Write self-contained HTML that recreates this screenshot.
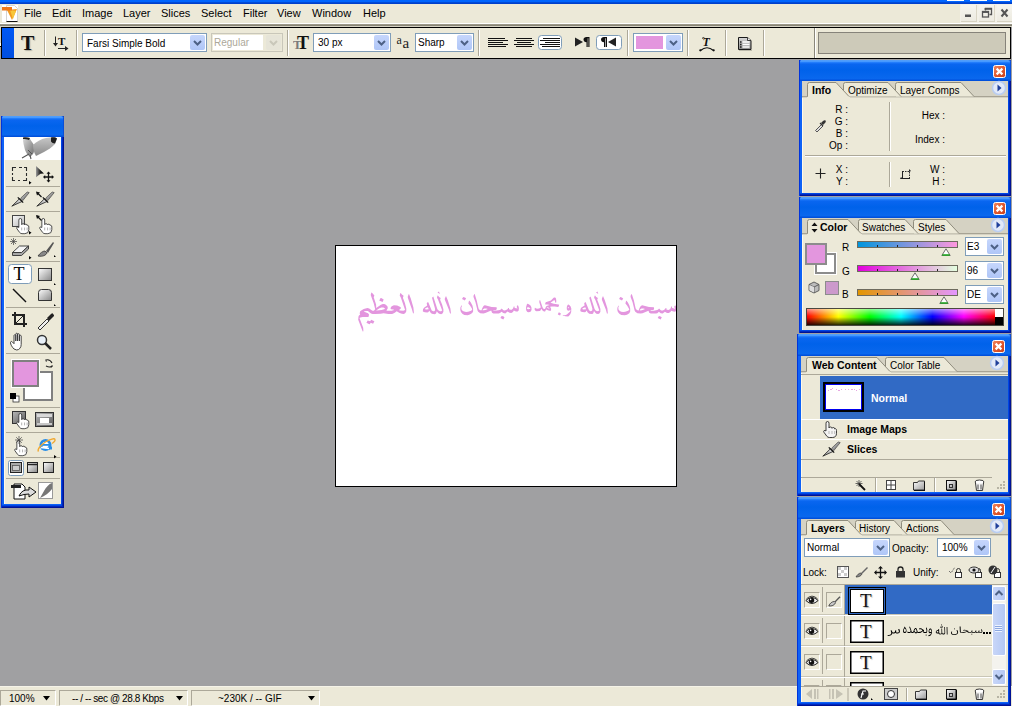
<!DOCTYPE html>
<html><head><meta charset="utf-8">
<style>
*{margin:0;padding:0;box-sizing:border-box}
html,body{width:1012px;height:706px;overflow:hidden;background:#A0A0A2;font-family:"Liberation Sans",sans-serif;font-size:10px;color:#000}
.b{font-weight:bold;font-size:10.5px}
.a{position:absolute}
#titlebar{left:0;top:0;width:1012px;height:4px;background:linear-gradient(#0066FF 0,#0064FC 2px,#0050E0 2px,#0044D0 3px,#003CC8 4px)}
#menubar{left:0;top:4px;width:1012px;height:20px;background:#ECE9D8}
.menu{top:7px;font-size:11px}
#sep1{left:0;top:23px;width:1012px;height:1px;background:#FFFFFF}
#sep2{left:0;top:24px;width:1012px;height:2px;background:linear-gradient(#A6A292,#7E7B6E)}
#sep3{left:0;top:26px;width:1012px;height:1px;background:#D6D2C2}
#optbar{left:1px;top:27px;width:1010px;height:32px;background:#ECE9D8;border:1px solid #000}
#optgrip{left:2px;top:28px;width:12px;height:30px;background:linear-gradient(#0058F4,#004EE0)}
.vsep{width:2px;height:26px;border-left:1px solid #ACA899;border-right:1px solid #FFF}
.sel{background:#fff;border:1px solid #7F9DB9;height:19px}
.selbtn{position:absolute;right:1px;top:1px;width:15px;height:15px;background:linear-gradient(#C6D6FC,#AFC6F7);border-radius:2px}
#ws{left:0;top:59px;width:1012px;height:627px;background:#A0A0A2}
#status{left:0;top:686px;width:1012px;height:20px;background:#ECE9D8}
#doc{left:335px;top:245px;width:342px;height:242px;background:#fff;border:1px solid #000}
.panel{background:#0A4ADE}
.ptitle{position:absolute;left:0;top:0;right:0;height:21px;background:linear-gradient(#3D8CF9 0,#0E62F2 2px,#0358EC 60%,#0A5AE9 100%)}
.pin{position:absolute;background:#ECE9D8}
.tabbar{position:absolute;left:0;right:0;top:0;height:16px;background:#D6D2C2;border-bottom:1px solid #ACA899}
.closeb{position:absolute;width:14px;height:14px;background:#E05A32;border:1px solid #fff;border-radius:2px}
</style></head><body>
<div class="a" id="titlebar"></div>
<div class="a" id="menubar"></div>
<div class="a menu" style="left:24px">File</div>
<div class="a menu" style="left:52px">Edit</div>
<div class="a menu" style="left:82px">Image</div>
<div class="a menu" style="left:123px">Layer</div>
<div class="a menu" style="left:161px">Slices</div>
<div class="a menu" style="left:201px">Select</div>
<div class="a menu" style="left:243px">Filter</div>
<div class="a menu" style="left:277px">View</div>
<div class="a menu" style="left:312px">Window</div>
<div class="a menu" style="left:363px">Help</div>
<div class="a" id="sep1"></div><div class="a" id="sep2"></div><div class="a" id="sep3"></div>
<div class="a" id="optbar"></div>
<div class="a" id="optgrip"></div>
<!-- options bar content -->
<div class="a" style="left:21px;top:33px;font-family:'Liberation Serif',serif;font-size:20px;font-weight:bold;line-height:20px;color:#111;text-shadow:1px 1px 1px rgba(0,0,0,.25)">T</div>
<div class="a vsep" style="left:44px;top:30px"></div>
<svg class="a" style="left:52px;top:35px" width="18" height="17" viewBox="0 0 18 17">
 <path d="M3.5 1.5v8" stroke="#222" stroke-width="1"/><path d="M1 8l2.5 3.5L6 8z" fill="#222"/>
 <text x="6" y="10" font-family="Liberation Serif" font-weight="bold" font-size="11" fill="#111">T</text>
 <path d="M6 13.5h8" stroke="#222"/><path d="M13 11l3.5 2.5L13 16z" fill="#222"/>
</svg>
<div class="a vsep" style="left:76px;top:30px"></div>

<div class="a sel" style="left:82px;top:33px;width:125px"><span class="a" style="left:4px;top:4px">Farsi Simple Bold</span><div class="selbtn"><svg width="15" height="15"><path d="M4 6l3.5 3.5L11 6" stroke="#4D6185" stroke-width="2" fill="none"/></svg></div></div>

<div class="a" style="left:211px;top:33px;width:72px;height:19px;border:1px solid #C9C7BA;background:#ECE9D8"><div class="a" style="left:1px;top:1px;width:50px;height:15px;background:#fff"></div><span class="a" style="left:2px;top:3px;color:#ACA899">Regular</span><div class="a" style="left:54px;top:1px;width:15px;height:15px;background:#E6E4D8;border-radius:2px"><svg width="15" height="15"><path d="M4 6l3.5 3.5L11 6" stroke="#C9C7BA" stroke-width="2" fill="none"/></svg></div></div>
<div class="a vsep" style="left:287px;top:30px"></div>
<svg class="a" style="left:293px;top:35px" width="19" height="15" viewBox="0 0 19 15">
 <text x="0" y="14" font-family="Liberation Serif" font-weight="bold" font-size="13" fill="#7A7A7A">T</text>
 <text x="4" y="13.5" font-family="Liberation Serif" font-weight="bold" font-size="18" fill="#111">T</text>
</svg>
<div class="a sel" style="left:313px;top:33px;width:78px"><span class="a" style="left:4px;top:3px">30 px</span><div class="selbtn"><svg width="15" height="15"><path d="M4 6l3.5 3.5L11 6" stroke="#4D6185" stroke-width="2" fill="none"/></svg></div></div>
<svg class="a" style="left:396px;top:34px" width="16" height="15" viewBox="0 0 16 15">
 <text x="0.5" y="9.5" font-family="Liberation Serif" font-size="12" fill="#222">a</text>
 <text x="6.5" y="13.5" font-family="Liberation Serif" font-size="15" fill="#222">a</text>
</svg>
<div class="a sel" style="left:415px;top:33px;width:59px"><span class="a" style="left:2px;top:3px">Sharp</span><div class="selbtn"><svg width="15" height="15"><path d="M4 6l3.5 3.5L11 6" stroke="#4D6185" stroke-width="2" fill="none"/></svg></div></div>
<div class="a vsep" style="left:478px;top:30px"></div>

<svg class="a" style="left:486px;top:34px" width="80" height="17" viewBox="0 0 80 17">
 <g stroke="#111" stroke-width="1.1">
  <path d="M2 4.5h17M2 6.5h20M2 8.5h15M2 10.5h20M2 12.5h18"/>
  <path d="M30 4.5h16M28 6.5h20M31 8.5h14M28 10.5h20M30 12.5h16"/>
 </g>
 <rect x="52.5" y="1.5" width="23" height="14" rx="3" fill="#fff" stroke="#7F9DB9"/>
 <g stroke="#111" stroke-width="1.1">
  <path d="M57 4.5h17M54 6.5h20M59 8.5h15M54 10.5h20M56 12.5h18"/>
 </g>
</svg>
<svg class="a" style="left:573px;top:34px" width="52" height="17" viewBox="0 0 52 17">
 <path d="M2 3.5L10 8l-8 4.5z" fill="#222"/>
 <path d="M13.5 3h3v10h-1.2V4.2h-0.6V13h-1.2V8.2c-1.8 0-3-1-3-2.6S11.7 3 13.5 3z" fill="#111"/>
 <rect x="23.5" y="1.5" width="25" height="14" rx="3" fill="#fff" stroke="#7F9DB9"/>
 <path d="M31 3h3v10h-1.2V4.2h-0.6V13H31V8.2c-1.8 0-3-1-3-2.6S29.2 3 31 3z" fill="#111"/>
 <path d="M43 3.5L35 8l8 4.5z" fill="#222"/>
</svg>
<div class="a vsep" style="left:627px;top:30px"></div>
<div class="a" style="left:633px;top:33px;width:50px;height:19px;border:1px solid #7F9DB9;background:#fff"><div class="a" style="left:2px;top:2px;width:27px;height:13px;background:#E396DE"></div><div class="selbtn"><svg width="15" height="15"><path d="M4 6l3.5 3.5L11 6" stroke="#4D6185" stroke-width="2" fill="none"/></svg></div></div>
<div class="a vsep" style="left:687px;top:30px"></div>
<svg class="a" style="left:698px;top:35px" width="18" height="17" viewBox="0 0 18 17">
 <text x="4.5" y="10.5" font-family="Liberation Serif" font-style="italic" font-weight="bold" font-size="12" fill="#111">T</text>
 <path d="M4 3.5q1-1.5 2.5-0.5" stroke="#111" stroke-width="0.9" fill="none"/>
 <path d="M2.5 15.5Q9 10 15.5 15.5" stroke="#111" stroke-width="1.2" fill="none"/>
 <circle cx="2.3" cy="15.3" r="1.1" fill="#111"/><circle cx="15.7" cy="15.3" r="1.1" fill="#111"/>
</svg>
<div class="a vsep" style="left:725px;top:30px"></div>
<svg class="a" style="left:737px;top:36px" width="17" height="15" viewBox="0 0 17 15">
 <defs><linearGradient id="plg" x1="0" y1="0" x2="0" y2="1"><stop offset="0" stop-color="#D8D8D8"/><stop offset="1" stop-color="#8A8A8A"/></linearGradient></defs>
 <path d="M2 14.5h13" stroke="rgba(0,0,0,.2)" stroke-width="1"/>
 <path d="M1.5 1.5h9l3.5 3v9h-12.5z" fill="url(#plg)" stroke="#1A1A1A"/>
 <path d="M10.5 1.5v3h3.5" fill="#eee" stroke="#1A1A1A" stroke-width="0.8"/>
 <path d="M5.5 6h7M5.5 8.5h7M5.5 11h7" stroke="#fff" stroke-width="1.4"/>
 <path d="M3 6h1.5M3 8.5h1.5M3 11h1.5" stroke="#222" stroke-width="1.4"/>
</svg>
<div class="a vsep" style="left:763px;top:30px"></div>
<div class="a" style="left:814px;top:28px;width:2px;height:30px;border-left:1px solid #8A877A;border-right:1px solid #fff"></div>
<div class="a" style="left:818px;top:32px;width:188px;height:22px;background:#CDCAB9;border:1px solid #86837A"></div>

<div class="a" id="ws"></div>
<div class="a" id="doc"></div>
<div class="a" id="status"></div>

<div class="a" style="left:0;top:27px;width:1px;height:16px;background:#D6D2C2"></div><div class="a" style="left:0;top:43px;width:1px;height:3px;background:#FFFFF4"></div><div class="a" style="left:0;top:46px;width:1px;height:1px;background:#000"></div><div class="a" style="left:0;top:47px;width:1px;height:12px;background:#A0A0A2"></div>
<!-- canvas -->
<svg class="a" style="left:336px;top:246px" width="340" height="240" viewBox="336 246 340 240"><path fill-rule="evenodd" fill="#E396DE" d="M658.9 316.0L657.7 318.1L660.7 319.6L661.8 317.3L660.5 316.4ZM626.5 300.7L626.1 300.7L625.4 303.5L627.1 305.6L629.0 308.7L629.3 309.7L628.1 310.8L625.2 311.8L623.2 312.0L621.3 311.7L619.8 311.1L618.5 309.5L618.3 307.5L618.9 306.1L618.8 305.7L618.3 305.7L617.4 307.7L617.3 309.9L617.9 312.0L619.6 314.1L621.4 315.0L624.8 315.2L627.0 314.7L629.3 313.2L630.2 311.4L630.2 308.7L629.5 305.7L627.9 302.4ZM620.2 297.0L619.1 299.1L622.0 300.6L623.2 298.4L621.8 297.4ZM630.6 295.7L630.6 296.9L632.5 301.9L634.7 310.8L635.3 311.8L637.4 313.3L640.6 313.5L642.5 313.2L648.5 310.7L649.2 312.8L650.7 313.5L656.0 313.5L657.3 313.2L658.9 311.8L660.7 313.2L662.7 313.5L664.9 311.7L667.0 312.9L668.7 313.0L670.5 312.0L671.2 310.7L673.4 311.6L675.2 311.7L676.2 310.5L676.4 307.9L675.8 305.9L675.2 305.2L674.3 306.6L674.3 307.3L675.0 308.3L674.9 308.7L672.3 307.9L672.0 307.7L672.1 306.7L671.4 306.2L670.5 308.6L669.2 309.7L668.1 309.9L666.4 309.4L666.4 308.0L665.7 307.9L664.9 309.2L662.9 310.4L661.4 310.5L660.5 310.1L659.1 308.6L658.2 309.6L657.2 310.1L653.9 310.7L651.4 310.7L650.3 310.3L650.7 310.0L653.5 310.0L654.1 308.7L653.9 307.3L649.0 307.0L642.2 305.3L641.2 305.7L640.2 306.7L639.0 309.2L638.8 310.4L637.4 310.3L636.1 309.2L635.6 308.3L633.9 300.4L631.8 293.9L631.4 294.2ZM639.7 310.3L640.0 309.6L641.5 308.6L643.4 308.4L645.1 309.0L642.7 310.0L640.7 310.4ZM603.0 296.1L601.9 298.6L601.9 299.7L605.9 309.8L607.0 313.7L607.4 313.7L607.8 312.7L607.4 308.3L604.8 300.2ZM595.1 295.5L594.6 295.7L594.1 297.7L595.3 299.7L599.3 310.5L598.2 311.1L597.0 311.2L595.4 310.2L594.6 309.1L590.6 296.5L589.3 297.7L592.4 308.8L592.2 310.5L591.4 311.1L590.4 311.2L589.0 310.3L585.8 302.4L585.3 302.0L584.2 303.2L584.6 305.5L581.4 307.6L580.5 309.1L580.3 311.1L580.8 311.6L582.2 312.1L584.6 312.3L585.6 312.1L586.7 310.6L587.5 312.2L589.2 313.7L592.1 314.1L593.2 313.5L594.0 311.1L595.3 312.8L596.4 313.7L598.2 314.1L599.6 313.3L600.4 311.7L600.4 309.1L599.1 304.5L597.2 299.7L597.9 298.0L596.2 296.9ZM586.1 309.2L583.7 309.5L582.6 309.2L582.2 308.8L583.2 308.0L585.3 307.2ZM558.6 312.5L557.8 314.4L560.1 315.5L560.9 313.5L559.4 312.6ZM569.0 304.7L568.1 304.6L567.3 305.5L566.8 307.1L566.8 309.3L567.6 310.4L568.5 310.8L569.3 310.6L570.1 310.0L570.5 310.5L570.1 311.5L566.9 314.6L564.9 315.2L562.8 315.1L562.8 315.6L565.3 316.3L567.9 316.5L568.7 316.2L570.3 314.3L571.2 312.0L571.3 308.5L570.5 306.2ZM567.7 307.8L568.2 307.3L568.7 307.3L569.2 307.9L568.4 308.2ZM527.4 303.8L527.0 304.0L526.1 307.1L526.1 310.0L526.6 311.1L527.4 311.9L528.5 312.2L529.9 312.1L531.0 311.2L531.6 309.5L531.4 307.2L530.5 305.6L529.5 304.7L528.3 303.9ZM527.0 307.9L527.5 307.3L528.5 307.3L529.5 307.8L530.5 308.7L529.7 309.1L528.1 309.2L527.0 308.7ZM559.2 304.7L558.5 304.4L553.8 303.8L550.4 302.7L554.0 300.2L554.5 300.3L554.9 300.8L555.3 302.6L555.7 302.8L556.2 302.5L556.3 300.8L556.0 298.6L555.2 297.6L554.2 297.4L553.6 297.7L550.9 300.4L545.7 302.3L545.1 303.9L545.4 304.6L547.8 304.6L549.6 305.1L546.6 306.0L545.8 307.1L545.3 308.5L544.6 309.0L543.7 309.1L542.5 307.2L540.2 300.3L539.7 300.0L539.2 302.1L540.6 306.6L540.6 307.7L539.6 308.3L537.9 308.7L536.1 308.5L535.1 307.7L534.8 307.7L534.6 309.4L535.1 310.6L536.4 311.2L539.7 311.0L540.5 310.5L541.4 308.8L542.5 310.6L544.0 311.6L545.1 311.4L546.1 309.6L548.6 310.6L550.5 310.9L550.9 310.2L551.2 308.9L550.1 306.8L551.8 306.4L554.7 306.4L558.2 306.9L558.7 306.3ZM546.7 307.6L547.0 307.2L547.7 307.2L548.8 307.7L549.8 308.5L548.4 308.4ZM501.6 315.9L500.4 318.0L503.3 319.5L504.5 317.3L503.2 316.3ZM469.5 300.7L469.0 300.7L468.3 303.4L470.0 305.5L471.9 308.6L472.2 309.7L471.1 310.7L468.1 311.8L466.1 311.9L464.2 311.6L462.8 311.0L461.5 309.4L461.3 307.5L461.9 306.0L461.8 305.6L461.3 305.6L460.4 307.6L460.3 309.8L460.9 311.9L462.6 314.0L464.4 314.9L467.7 315.2L469.9 314.6L472.2 313.1L473.1 311.4L473.1 308.6L472.4 305.6L470.8 302.4ZM463.2 297.0L462.0 299.1L464.9 300.6L466.1 298.3L464.8 297.4ZM473.5 295.7L473.5 296.9L475.4 301.9L477.6 310.7L478.2 311.8L480.2 313.2L483.4 313.5L485.3 313.1L491.2 310.6L492.0 312.7L493.4 313.5L498.7 313.5L500.0 313.1L501.6 311.8L503.3 313.1L505.3 313.5L507.5 311.6L509.6 312.8L511.3 312.9L513.0 311.9L513.8 310.6L515.9 311.5L517.7 311.6L518.7 310.5L518.9 307.9L518.3 305.9L517.7 305.1L516.8 306.6L516.8 307.2L517.5 308.3L517.4 308.6L514.8 307.9L514.5 307.6L514.6 306.7L513.9 306.2L513.0 308.5L511.7 309.7L510.7 309.8L509.0 309.3L509.0 308.0L508.2 307.9L507.5 309.2L505.5 310.3L504.0 310.5L503.2 310.1L501.7 308.5L500.8 309.6L499.8 310.1L496.6 310.6L494.2 310.6L493.0 310.2L493.4 309.9L496.2 309.9L496.8 308.6L496.6 307.2L491.7 306.9L485.0 305.2L484.0 305.6L483.0 306.7L481.8 309.2L481.7 310.3L480.2 310.2L478.9 309.2L478.5 308.3L476.7 300.4L474.7 293.9L474.2 294.2ZM482.5 310.2L482.8 309.6L484.3 308.5L486.2 308.4L487.9 308.9L485.4 309.9L483.5 310.3ZM446.0 296.1L444.8 298.6L444.8 299.8L449.0 309.9L450.1 313.8L450.4 313.8L450.9 312.8L450.4 308.4L447.8 300.3ZM437.9 295.5L437.4 295.8L437.0 297.8L438.1 299.8L442.2 310.5L441.1 311.2L439.9 311.3L438.3 310.3L437.4 309.2L433.3 296.5L432.0 297.8L435.1 308.9L435.0 310.5L434.2 311.2L433.2 311.3L431.7 310.4L428.4 302.4L427.9 302.0L426.7 303.3L427.2 305.5L424.0 307.7L423.0 309.2L422.8 311.2L423.3 311.7L424.8 312.2L427.2 312.4L428.2 312.2L429.4 310.7L430.2 312.3L431.8 313.8L434.8 314.2L436.0 313.5L436.8 311.2L438.1 312.9L439.3 313.8L441.1 314.2L442.5 313.4L443.4 311.8L443.4 309.2L442.1 304.5L440.1 299.8L440.7 298.0L439.1 296.9ZM428.7 309.3L426.3 309.5L425.1 309.3L424.8 308.9L425.8 308.0L427.9 307.3ZM374.4 321.2L371.2 319.7L370.2 321.2L367.7 320.4L366.4 322.7L369.4 324.2L369.9 324.1L370.7 322.7L373.1 323.7ZM380.6 298.1L379.2 300.5L382.6 301.9L383.7 299.4L381.2 298.1ZM408.9 293.7L407.8 296.5L407.8 297.8L411.9 309.2L413.1 313.6L413.4 313.6L413.9 312.4L413.4 307.5L410.8 298.4ZM400.8 293.0L400.3 293.3L399.7 295.6L400.9 297.8L405.1 309.9L403.3 310.7L399.7 310.5L399.1 310.0L400.8 308.6L400.9 307.8L400.4 306.9L397.1 305.4L393.9 305.3L392.2 306.0L391.2 306.8L390.6 307.9L390.6 308.8L391.2 309.2L393.4 309.5L394.1 310.0L391.7 310.7L387.2 310.7L386.4 310.5L387.7 308.4L387.7 306.7L385.9 304.7L384.2 304.0L382.9 304.0L380.9 304.7L376.2 307.9L376.1 304.4L373.7 297.2L374.4 295.4L372.0 292.7L371.5 292.6L371.2 292.9L370.7 295.0L373.7 303.3L375.2 309.2L373.9 310.7L372.4 310.7L369.2 308.4L367.4 307.9L363.7 309.1L361.2 310.5L360.0 311.6L359.7 313.8L360.2 314.4L359.0 315.4L358.5 316.4L358.2 319.7L362.7 331.6L363.4 331.3L363.2 327.8L359.5 318.1L360.4 317.5L362.7 316.9L368.2 316.9L368.7 316.4L369.0 314.5L368.0 313.3L364.2 311.7L364.0 311.3L366.2 310.9L367.9 311.0L371.0 313.4L372.6 314.0L375.1 314.1L380.7 313.8L383.6 313.3L388.4 314.0L392.1 314.0L394.4 313.0L396.7 311.2L399.6 313.0L401.9 313.8L403.9 314.0L405.4 313.1L406.3 311.3L406.3 308.4L404.9 303.1L402.9 297.8L403.6 295.8L401.9 294.6ZM385.1 308.6L384.2 309.2L381.6 309.9L376.9 310.6L376.1 310.5L379.4 308.2L381.4 307.5L383.4 307.6Z"/><path d="M596 292.5l1.5-1 0.8 2.5zM437.5 292.5l1.5-1 0.8 2.5z" fill="#E396DE"/></svg>
<!-- /canvas -->
<!-- status -->
<div class="a" style="left:0;top:686px;width:1012px;height:1px;background:#F5F3E8"></div>
<div class="a" style="left:0;top:690px;width:56px;height:16px;border-top:1px solid #ACA899;border-left:1px solid #ACA899;border-right:1px solid #fff;border-bottom:1px solid #fff"></div>
<div class="a" style="left:59px;top:690px;width:129px;height:16px;border-top:1px solid #ACA899;border-left:1px solid #ACA899;border-right:1px solid #fff;border-bottom:1px solid #fff"></div>
<div class="a" style="left:191px;top:690px;width:129px;height:16px;border-top:1px solid #ACA899;border-left:1px solid #ACA899;border-right:1px solid #fff;border-bottom:1px solid #fff"></div>
<div class="a" style="left:9px;top:693px">100%</div>
<div class="a" style="left:72px;top:693px;letter-spacing:-0.4px;word-spacing:0px">-- / -- sec @ 28.8 Kbps</div>
<div class="a" style="left:218px;top:693px">~230K / -- GIF</div>
<svg class="a" style="left:0;top:690px" width="330" height="16"><path d="M43 6h7l-3.5 4.5zM176 6h7l-3.5 4.5zM308 6h7l-3.5 4.5z" fill="#000"/></svg>
<!-- /status -->
<!-- winbtns -->
<div class="a" style="left:947px;top:0;width:17px;height:1px;background:#fff"></div>
<div class="a" style="left:970px;top:0;width:17px;height:1px;background:#fff"></div>
<div class="a" style="left:993px;top:0;width:17px;height:1px;background:#fff"></div>
<div class="a" style="left:960px;top:4px;width:52px;height:19px;background:#F3F1E8"></div>
<div class="a" style="left:961px;top:5px;width:16px;height:17px;background:linear-gradient(#F6F5EF,#EDEBE1);border-right:1px solid #DAD6C6;border-bottom:1px solid #D6D2C2"></div>
<div class="a" style="left:979px;top:5px;width:16px;height:17px;background:linear-gradient(#F6F5EF,#EDEBE1);border-right:1px solid #DAD6C6;border-bottom:1px solid #D6D2C2"></div>
<div class="a" style="left:997px;top:5px;width:15px;height:17px;background:linear-gradient(#F6F5EF,#EDEBE1);border-bottom:1px solid #D6D2C2"></div>
<svg class="a" style="left:960px;top:4px" width="52" height="19">
 <rect x="5" y="10.5" width="6" height="2.5" fill="#555"/>
 <path d="M25.5 6.5V4.5h6v6h-2" stroke="#555" stroke-width="1.3" fill="none"/><path d="M24.5 5h7.5" stroke="#555" stroke-width="1.5"/>
 <rect x="22.5" y="7.5" width="6" height="5.5" fill="none" stroke="#555" stroke-width="1.3"/><path d="M22 8.2h7" stroke="#555" stroke-width="1.5"/>
 <path d="M41.5 5.5l6 7M47.5 5.5l-6 7" stroke="#555" stroke-width="2"/>
</svg>
<!-- /winbtns -->
<!-- appicon -->
<svg class="a" style="left:1px;top:4px" width="18" height="19" viewBox="0 0 18 19">
 <rect x="1" y="1" width="16" height="17" fill="#fff"/>
 <path d="M5.5 1.5h8l3 3v13h-11z" fill="#fff" stroke="#C8C8C8" stroke-width="0.8"/>
 <path d="M5.5 17.5h11" stroke="#111" stroke-width="1"/>
 <path d="M6 6l5 10 5-11z" fill="#F29A1E"/>
 <path d="M9 6l3 9 3-8z" fill="#F7C63A"/>
 <rect x="1" y="3" width="10" height="3.5" fill="#F07818"/>
</svg>
<!-- /appicon -->
<!-- panels -->
<div class="a" style="left:799px;top:60px;width:212px;height:136px;background:#0E62F6;border-left:1px solid #0034DC;box-shadow:inset -1px -1px 0 #001294,inset -2px -2px 0 #0028BC,inset -3px -3px 0 #0046E4"></div><div class="a" style="left:799px;top:60px;width:212px;height:21px;background:linear-gradient(#3F8CF4 0,#62AEFF 1px,#2A84FF 2px,#0A66F0 4px,#0062EA 10px,#0A68EE 19px,#0050DC 20px);border-left:1px solid #0034DC;border-top-left-radius:2px;border-top-right-radius:2px;box-shadow:inset -1px 0 0 #0A4ED8"></div><div class="a" style="left:802px;top:81px;width:206px;height:112px;background:#ECE9D8;box-shadow:inset 1px 0 0 #FFF9E8"></div>
<svg class="a" style="left:993px;top:65px" width="13" height="13"><defs><linearGradient id="cbg99365" x1="0" y1="0" x2="1" y2="1"><stop offset="0" stop-color="#F08A64"/><stop offset="0.5" stop-color="#E05A2E"/><stop offset="1" stop-color="#C8401A"/></linearGradient></defs><rect x="0.5" y="0.5" width="12" height="12" rx="2" fill="url(#cbg99365)" stroke="#fff"/><path d="M3.6 3.6l5.8 5.8M9.4 3.6l-5.8 5.8" stroke="#fff" stroke-width="2.2"/></svg>
<svg class="a" style="left:802px;top:81px" width="206" height="17" viewBox="802 81 206 17">
<rect x="802" y="81" width="206" height="17" fill="#D5D2C3"/>
<path d="M802 96.5H1008" stroke="#A7A394"/>
<path d="M895.5 96.5V84.5Q895.5 82.5 897.5 82.5H961L974 96.5Z" fill="#ECE9D8"/>
<path d="M895.5 96.5V84.5Q895.5 82.5 897.5 82.5H961L974 96.5" fill="none" stroke="#8F8C7D"/>
<path d="M843.5 96.5V84.5Q843.5 82.5 845.5 82.5H888L901 96.5Z" fill="#ECE9D8"/>
<path d="M843.5 96.5V84.5Q843.5 82.5 845.5 82.5H888L901 96.5" fill="none" stroke="#8F8C7D"/>
<path d="M807.5 96.5V84.5Q807.5 82.5 809.5 82.5H836L849 96.5Z" fill="#ECE9D8"/>
<path d="M807.5 96.5V84.5Q807.5 82.5 809.5 82.5H836L849 96.5" fill="none" stroke="#8F8C7D"/>
<path d="M808 96.5H848.5" stroke="#ECE9D8"/>
<path d="M807 97.5H850" stroke="#ECE9D8"/>
</svg>
<div class="a b" style="left:812px;top:84px">Info</div>
<div class="a" style="left:848px;top:85px">Optimize</div>
<div class="a" style="left:900px;top:85px">Layer Comps</div>
<svg class="a" style="left:991px;top:80px" width="16" height="16"><circle cx="8" cy="8" r="6.5" fill="#E3EAF8" stroke="#B9CDF2" stroke-width="1.5"/><path d="M6.5 4.5l4 3.5-4 3.5z" fill="#1F3F9A"/></svg>
<div class="a" style="left:832px;top:104px;line-height:12px;text-align:right;width:16px">R :<br>G :<br>B :</div>
<div class="a" style="left:824px;top:140px;line-height:12px;text-align:right;width:24px">Op :</div>
<div class="a" style="left:907px;top:110px;line-height:12px;text-align:right;width:38px">Hex :</div>
<div class="a" style="left:897px;top:134px;line-height:12px;text-align:right;width:48px">Index :</div>
<div class="a" style="left:832px;top:164px;line-height:12px;text-align:right;width:16px">X :<br>Y :</div>
<div class="a" style="left:921px;top:164px;line-height:12px;text-align:right;width:24px">W :<br>H :</div>
<div class="a" style="left:889px;top:102px;width:2px;height:49px;border-left:1px solid #ACA899;border-right:1px solid #fff"></div>
<div class="a" style="left:889px;top:162px;width:2px;height:25px;border-left:1px solid #ACA899;border-right:1px solid #fff"></div>
<div class="a" style="left:805px;top:155px;width:201px;height:2px;border-top:1px solid #ACA899;border-bottom:1px solid #fff"></div>
<svg class="a" style="left:814px;top:119px" width="12" height="13"><path d="M1.5 11.5l6-6 1.5 1.5-6 6z" fill="#ddd" stroke="#444" stroke-width="0.9"/><path d="M7 4l2-2c1-1 2-1 2.5-.5s.5 1.5-.5 2.5l-2 2z" fill="#333"/><path d="M6 4l3 3" stroke="#333" stroke-width="1.2"/></svg>
<svg class="a" style="left:815px;top:168px" width="11" height="11"><path d="M5.5 0.5v10M0.5 5.5h10" stroke="#222" stroke-width="1.1"/></svg>
<svg class="a" style="left:900px;top:168px" width="13" height="12"><path d="M2.5 3.5h7v7h-7z" fill="none" stroke="#333" stroke-dasharray="1.5,1"/><path d="M2.5 3v8M2 10.5h8" stroke="#222"/><path d="M9 1l2 2-2 1z" fill="#222"/><path d="M1 9l2 2H0z" fill="#222"/></svg>
<div class="a" style="left:799px;top:197px;width:212px;height:136px;background:#0E62F6;border-left:1px solid #0034DC;box-shadow:inset -1px -1px 0 #001294,inset -2px -2px 0 #0028BC,inset -3px -3px 0 #0046E4"></div><div class="a" style="left:799px;top:197px;width:212px;height:21px;background:linear-gradient(#3F8CF4 0,#62AEFF 1px,#2A84FF 2px,#0A66F0 4px,#0062EA 10px,#0A68EE 19px,#0050DC 20px);border-left:1px solid #0034DC;border-top-left-radius:2px;border-top-right-radius:2px;box-shadow:inset -1px 0 0 #0A4ED8"></div><div class="a" style="left:802px;top:218px;width:206px;height:112px;background:#ECE9D8;box-shadow:inset 1px 0 0 #FFF9E8"></div>
<svg class="a" style="left:993px;top:202px" width="13" height="13"><defs><linearGradient id="cbg993202" x1="0" y1="0" x2="1" y2="1"><stop offset="0" stop-color="#F08A64"/><stop offset="0.5" stop-color="#E05A2E"/><stop offset="1" stop-color="#C8401A"/></linearGradient></defs><rect x="0.5" y="0.5" width="12" height="12" rx="2" fill="url(#cbg993202)" stroke="#fff"/><path d="M3.6 3.6l5.8 5.8M9.4 3.6l-5.8 5.8" stroke="#fff" stroke-width="2.2"/></svg>
<svg class="a" style="left:802px;top:218px" width="206" height="17" viewBox="802 218 206 17">
<rect x="802" y="218" width="206" height="17" fill="#D5D2C3"/>
<path d="M802 233.5H1008" stroke="#A7A394"/>
<path d="M913.5 233.5V221.5Q913.5 219.5 915.5 219.5H946L959 233.5Z" fill="#ECE9D8"/>
<path d="M913.5 233.5V221.5Q913.5 219.5 915.5 219.5H946L959 233.5" fill="none" stroke="#8F8C7D"/>
<path d="M858.5 233.5V221.5Q858.5 219.5 860.5 219.5H905L918 233.5Z" fill="#ECE9D8"/>
<path d="M858.5 233.5V221.5Q858.5 219.5 860.5 219.5H905L918 233.5" fill="none" stroke="#8F8C7D"/>
<path d="M807.5 233.5V221.5Q807.5 219.5 809.5 219.5H848L861 233.5Z" fill="#ECE9D8"/>
<path d="M807.5 233.5V221.5Q807.5 219.5 809.5 219.5H848L861 233.5" fill="none" stroke="#8F8C7D"/>
<path d="M808 233.5H860.5" stroke="#ECE9D8"/>
<path d="M807 234.5H862" stroke="#ECE9D8"/>
</svg>
<svg class="a" style="left:811px;top:222px" width="7" height="11"><path d="M3.5 0.5L0.5 4h6zM3.5 10.5L0.5 7h6z" fill="#111"/></svg>
<div class="a b" style="left:820px;top:221px">Color</div>
<div class="a" style="left:862px;top:222px">Swatches</div>
<div class="a" style="left:918px;top:222px">Styles</div>
<svg class="a" style="left:990px;top:217px" width="16" height="16"><circle cx="8" cy="8" r="6.5" fill="#E3EAF8" stroke="#B9CDF2" stroke-width="1.5"/><path d="M6.5 4.5l4 3.5-4 3.5z" fill="#1F3F9A"/></svg>
<div class="a" style="left:815px;top:253px;width:21px;height:21px;background:#fff;border:2px solid #8C8C8C;outline:1px solid #fff"></div>
<div class="a" style="left:805px;top:243px;width:22px;height:22px;background:#E396DE;border:2px solid #8C8C8C"></div>
<svg class="a" style="left:808px;top:281px" width="12" height="13"><path d="M6 1l5 2.5v6L6 12 1 9.5v-6z" fill="#BBB" stroke="#555" stroke-width="0.9"/><path d="M1 3.5L6 6l5-2.5M6 6v6" stroke="#555" stroke-width="0.9" fill="none"/><path d="M1.5 4L6 6v5.5L1.5 9.2z" fill="#DDD"/></svg>
<div class="a" style="left:825px;top:281px;width:14px;height:14px;background:#CC99CC;border:1px solid #8C8C8C"></div>
<div class="a" style="left:842px;top:236px;line-height:23.6px">R<br>G<br>B</div>
<div class="a" style="left:857px;top:241px;width:101px;height:7px;background:linear-gradient(90deg,#0096DE,#FF96DE);border:1px solid #6E6B5E"></div>
<div class="a" style="left:877px;top:245px;width:1px;height:2px;background:#222"></div>
<div class="a" style="left:897px;top:245px;width:1px;height:2px;background:#222"></div>
<div class="a" style="left:917px;top:245px;width:1px;height:2px;background:#222"></div>
<div class="a" style="left:937px;top:245px;width:1px;height:2px;background:#222"></div>
<svg class="a" style="left:941px;top:248px" width="10" height="9"><path d="M5 0.8L9.2 7.5H0.8z" fill="#FFFFFF" stroke="#5E5E5E" stroke-width="0.9" stroke-linejoin="round"/><path d="M1.3 7h7.4" stroke="#22A822" stroke-width="1.6"/></svg>
<div class="a sel" style="left:965px;top:237px;width:39px;height:19px"><span class="a" style="left:1px;top:3px">E3</span><div class="selbtn" style="top:1px"><svg width="15" height="15"><path d="M4 6l3.5 3.5L11 6" stroke="#4D6185" stroke-width="2" fill="none"/></svg></div></div>
<div class="a" style="left:857px;top:265px;width:101px;height:7px;background:linear-gradient(90deg,#E300DE,#E3FFDE);border:1px solid #6E6B5E"></div>
<div class="a" style="left:877px;top:269px;width:1px;height:2px;background:#222"></div>
<div class="a" style="left:897px;top:269px;width:1px;height:2px;background:#222"></div>
<div class="a" style="left:917px;top:269px;width:1px;height:2px;background:#222"></div>
<div class="a" style="left:937px;top:269px;width:1px;height:2px;background:#222"></div>
<svg class="a" style="left:910px;top:272px" width="10" height="9"><path d="M5 0.8L9.2 7.5H0.8z" fill="#FFFFFF" stroke="#5E5E5E" stroke-width="0.9" stroke-linejoin="round"/><path d="M1.3 7h7.4" stroke="#22A822" stroke-width="1.6"/></svg>
<div class="a sel" style="left:965px;top:261px;width:39px;height:19px"><span class="a" style="left:1px;top:3px">96</span><div class="selbtn" style="top:1px"><svg width="15" height="15"><path d="M4 6l3.5 3.5L11 6" stroke="#4D6185" stroke-width="2" fill="none"/></svg></div></div>
<div class="a" style="left:857px;top:289px;width:101px;height:7px;background:linear-gradient(90deg,#E39600,#E396FF);border:1px solid #6E6B5E"></div>
<div class="a" style="left:877px;top:293px;width:1px;height:2px;background:#222"></div>
<div class="a" style="left:897px;top:293px;width:1px;height:2px;background:#222"></div>
<div class="a" style="left:917px;top:293px;width:1px;height:2px;background:#222"></div>
<div class="a" style="left:937px;top:293px;width:1px;height:2px;background:#222"></div>
<svg class="a" style="left:939px;top:296px" width="10" height="9"><path d="M5 0.8L9.2 7.5H0.8z" fill="#FFFFFF" stroke="#5E5E5E" stroke-width="0.9" stroke-linejoin="round"/><path d="M1.3 7h7.4" stroke="#22A822" stroke-width="1.6"/></svg>
<div class="a sel" style="left:965px;top:285px;width:39px;height:19px"><span class="a" style="left:1px;top:3px">DE</span><div class="selbtn" style="top:1px"><svg width="15" height="15"><path d="M4 6l3.5 3.5L11 6" stroke="#4D6185" stroke-width="2" fill="none"/></svg></div></div>
<div class="a" style="left:806px;top:308px;width:198px;height:18px;border:1px solid #4A4840;background:linear-gradient(rgba(255,255,255,.55) 0%,rgba(255,255,255,0) 45%,rgba(0,0,0,0) 50%,rgba(0,0,0,.85) 100%),linear-gradient(90deg,#FF0000 0%,#FFFF00 16%,#00FF00 32%,#00FFFF 48%,#0000FF 64%,#FF00FF 80%,#FF0000 96%)"></div>
<div class="a" style="left:995px;top:309px;width:8px;height:8px;background:#fff"></div><div class="a" style="left:995px;top:317px;width:8px;height:8px;background:#000"></div>
<div class="a" style="left:797px;top:334px;width:214px;height:162px;background:#0E62F6;border-left:1px solid #0034DC;box-shadow:inset -1px -1px 0 #001294,inset -2px -2px 0 #0028BC,inset -3px -3px 0 #0046E4"></div><div class="a" style="left:797px;top:334px;width:214px;height:22px;background:linear-gradient(#3F8CF4 0,#62AEFF 1px,#2A84FF 2px,#0A66F0 4px,#0062EA 10px,#0A68EE 20px,#0050DC 21px);border-left:1px solid #0034DC;border-top-left-radius:2px;border-top-right-radius:2px;box-shadow:inset -1px 0 0 #0A4ED8"></div><div class="a" style="left:801px;top:356px;width:207px;height:136px;background:#ECE9D8;box-shadow:inset 1px 0 0 #FFF9E8"></div>
<svg class="a" style="left:992px;top:340px" width="13" height="13"><defs><linearGradient id="cbg992340" x1="0" y1="0" x2="1" y2="1"><stop offset="0" stop-color="#F08A64"/><stop offset="0.5" stop-color="#E05A2E"/><stop offset="1" stop-color="#C8401A"/></linearGradient></defs><rect x="0.5" y="0.5" width="12" height="12" rx="2" fill="url(#cbg992340)" stroke="#fff"/><path d="M3.6 3.6l5.8 5.8M9.4 3.6l-5.8 5.8" stroke="#fff" stroke-width="2.2"/></svg>
<svg class="a" style="left:801px;top:356px" width="207" height="17" viewBox="801 356 207 17">
<rect x="801" y="356" width="207" height="17" fill="#D5D2C3"/>
<path d="M801 371.5H1008" stroke="#A7A394"/>
<path d="M885.5 371.5V359.5Q885.5 357.5 887.5 357.5H944L957 371.5Z" fill="#ECE9D8"/>
<path d="M885.5 371.5V359.5Q885.5 357.5 887.5 357.5H944L957 371.5" fill="none" stroke="#8F8C7D"/>
<path d="M806.5 371.5V359.5Q806.5 357.5 808.5 357.5H877L890 371.5Z" fill="#ECE9D8"/>
<path d="M806.5 371.5V359.5Q806.5 357.5 808.5 357.5H877L890 371.5" fill="none" stroke="#8F8C7D"/>
<path d="M807 371.5H889.5" stroke="#ECE9D8"/>
<path d="M806 372.5H891" stroke="#ECE9D8"/>
</svg>
<div class="a b" style="left:812px;top:359px">Web Content</div>
<div class="a" style="left:890px;top:360px">Color Table</div>
<svg class="a" style="left:989px;top:355px" width="16" height="16"><circle cx="8" cy="8" r="6.5" fill="#E3EAF8" stroke="#B9CDF2" stroke-width="1.5"/><path d="M6.5 4.5l4 3.5-4 3.5z" fill="#1F3F9A"/></svg>
<div class="a" style="left:801px;top:374px;width:207px;height:1px;background:#ACA899"></div>
<div class="a" style="left:820px;top:376px;width:188px;height:43px;background:#316AC5"></div>
<div class="a" style="left:823px;top:382px;width:41px;height:30px;background:#000;padding:2px"><div style="width:37px;height:26px;background:#fff;border:1px solid #0000F0"></div></div>
<svg class="a" style="left:827px;top:388px" width="34" height="4"><g fill="#E6A8E2"><rect x="1" y="2" width="1" height="1"/><rect x="3" y="1" width="2" height="1"/><rect x="5" y="0" width="1" height="1"/><rect x="9" y="1" width="1" height="1"/><rect x="11" y="2" width="2" height="1"/><rect x="14" y="1" width="1" height="1"/><rect x="18" y="1" width="1" height="1"/><rect x="21" y="1" width="1" height="1"/><rect x="24" y="1" width="2" height="1"/><rect x="27" y="1" width="1" height="1"/><rect x="29" y="2" width="1" height="1"/><rect x="32" y="1" width="1" height="1"/></g></svg>
<div class="a b" style="left:871px;top:392px;color:#fff">Normal</div>
<div class="a" style="left:801px;top:419px;width:207px;height:1px;background:#fff"></div>
<div class="a" style="left:801px;top:439px;width:207px;height:1px;background:#fff"></div>
<div class="a" style="left:801px;top:459px;width:207px;height:1px;background:#ACA899"></div>
<div class="a b" style="left:847px;top:423px">Image Maps</div>
<div class="a b" style="left:847px;top:443px">Slices</div>
<svg class="a" style="left:823px;top:421px" width="15" height="17"><path d="M3 9.5V2.2Q3 0.5 4.5 0.5Q6 0.5 6 2.2V7Q6.2 6 7.5 6Q8.8 6 9 7.3Q9.3 6.5 10.3 6.5Q11.6 6.5 11.7 7.9Q12 7.5 12.6 7.7Q13.5 8 13.5 9.5V12.3Q13.5 16.5 9.3 16.5H6.3Q4.8 16.5 3.8 15.2L0.9 11.2Q0.3 10.2 1.1 9.6Q2 9.1 3 10z" fill="#F4F4F4" stroke="#2A2A2A" stroke-width="0.9"/><path d="M6 10v3M9 10v3M11.7 10v3" stroke="#AAA" stroke-width="0.8"/></svg>
<svg class="a" style="left:822px;top:441px" width="19" height="16"><defs><linearGradient id="kbl" x1="0" y1="1" x2="1" y2="0"><stop offset="0" stop-color="#888"/><stop offset="1" stop-color="#F0F0F0"/></linearGradient><linearGradient id="khd" x1="0" y1="0" x2="1" y2="1"><stop offset="0" stop-color="#DDD"/><stop offset="1" stop-color="#555"/></linearGradient></defs><path d="M0.8 15.2L8.6 7.6L11.2 10.4z" fill="url(#kbl)" stroke="#222" stroke-width="0.8" stroke-linejoin="round"/><path d="M9.6 7.2L16.2 1L18.2 1.6L11.8 9.6z" fill="url(#khd)" stroke="#333" stroke-width="0.6"/><path d="M6.8 6.4L12.2 11.6" stroke="#111" stroke-width="1.3"/></svg>
<div class="a" style="left:801px;top:477px;width:191px;height:1px;background:#ACA899"></div>
<div class="a" style="left:875px;top:478px;width:2px;height:14px;border-left:1px solid #ACA899;border-right:1px solid #fff"></div>
<div class="a" style="left:934px;top:478px;width:2px;height:14px;border-left:1px solid #ACA899;border-right:1px solid #fff"></div>
<svg class="a" style="left:854px;top:480px" width="12" height="11"><path d="M5 0v7M1.5 3.5h7M2.5 1l5 5M7.5 1l-5 5" stroke="#444" stroke-width="0.8"/><path d="M5 4l6 6" stroke="#111" stroke-width="1.8"/></svg>
<svg class="a" style="left:886px;top:480px" width="10" height="10"><rect x="0.5" y="0.5" width="9" height="9" fill="#fff" stroke="#444"/><path d="M5 0v10M0 5h10" stroke="#444"/></svg>
<svg class="a" style="left:913px;top:480px" width="13" height="11"><defs><linearGradient id="fgr" x1="0" y1="0" x2="1" y2="1"><stop offset="0" stop-color="#FFF"/><stop offset="1" stop-color="#9A9A9A"/></linearGradient></defs><path d="M0.5 2.5h4l1-1.5h6v9h-11z" fill="url(#fgr)" stroke="#222" stroke-width="0.9"/><path d="M1 10.5h11M11.5 2v8.5" stroke="#111" stroke-width="1"/></svg>
<svg class="a" style="left:946px;top:480px" width="11" height="11"><defs><linearGradient id="ngr" x1="0" y1="0" x2="1" y2="1"><stop offset="0" stop-color="#FFF"/><stop offset="1" stop-color="#8A8A8A"/></linearGradient></defs><rect x="0.5" y="0.5" width="9.5" height="9.5" fill="url(#ngr)" stroke="#111"/><rect x="3.5" y="4.5" width="3" height="3" fill="none" stroke="#222" stroke-width="0.9"/><path d="M10.5 1v9.5H1" stroke="#000" fill="none"/></svg>
<svg class="a" style="left:974px;top:479px" width="11" height="13"><ellipse cx="5.5" cy="3" rx="4.5" ry="2" fill="#fff" stroke="#222" stroke-width="0.9"/><path d="M1.5 4l1 7.5h6l1-7.5" fill="#F4F4F4" stroke="#222" stroke-width="0.9"/><path d="M4 5.5v5M7 5.5v5" stroke="#333" stroke-width="0.9"/></svg>
<svg class="a" style="left:995px;top:481px" width="11" height="10"><g fill="#B7B4A4"><rect x="8" y="0" width="2" height="2"/><rect x="5" y="3" width="2" height="2"/><rect x="8" y="3" width="2" height="2"/><rect x="2" y="6" width="2" height="2"/><rect x="5" y="6" width="2" height="2"/><rect x="8" y="6" width="2" height="2"/></g></svg>
<div class="a" style="left:797px;top:497px;width:214px;height:209px;background:#0E62F6;border-left:1px solid #0034DC;box-shadow:inset -1px -1px 0 #001294,inset -2px -2px 0 #0028BC,inset -3px -3px 0 #0046E4"></div><div class="a" style="left:797px;top:497px;width:214px;height:22px;background:linear-gradient(#3F8CF4 0,#62AEFF 1px,#2A84FF 2px,#0A66F0 4px,#0062EA 10px,#0A68EE 20px,#0050DC 21px);border-left:1px solid #0034DC;border-top-left-radius:2px;border-top-right-radius:2px;box-shadow:inset -1px 0 0 #0A4ED8"></div><div class="a" style="left:801px;top:519px;width:207px;height:183px;background:#ECE9D8;box-shadow:inset 1px 0 0 #FFF9E8"></div>
<svg class="a" style="left:992px;top:503px" width="13" height="13"><defs><linearGradient id="cbg992503" x1="0" y1="0" x2="1" y2="1"><stop offset="0" stop-color="#F08A64"/><stop offset="0.5" stop-color="#E05A2E"/><stop offset="1" stop-color="#C8401A"/></linearGradient></defs><rect x="0.5" y="0.5" width="12" height="12" rx="2" fill="url(#cbg992503)" stroke="#fff"/><path d="M3.6 3.6l5.8 5.8M9.4 3.6l-5.8 5.8" stroke="#fff" stroke-width="2.2"/></svg>
<svg class="a" style="left:801px;top:519px" width="207" height="17" viewBox="801 519 207 17">
<rect x="801" y="519" width="207" height="17" fill="#D5D2C3"/>
<path d="M801 534.5H1008" stroke="#A7A394"/>
<path d="M901.5 534.5V522.5Q901.5 520.5 903.5 520.5H941L954 534.5Z" fill="#ECE9D8"/>
<path d="M901.5 534.5V522.5Q901.5 520.5 903.5 520.5H941L954 534.5" fill="none" stroke="#8F8C7D"/>
<path d="M855.5 534.5V522.5Q855.5 520.5 857.5 520.5H894L907 534.5Z" fill="#ECE9D8"/>
<path d="M855.5 534.5V522.5Q855.5 520.5 857.5 520.5H894L907 534.5" fill="none" stroke="#8F8C7D"/>
<path d="M806.5 534.5V522.5Q806.5 520.5 808.5 520.5H848L861 534.5Z" fill="#ECE9D8"/>
<path d="M806.5 534.5V522.5Q806.5 520.5 808.5 520.5H848L861 534.5" fill="none" stroke="#8F8C7D"/>
<path d="M807 534.5H860.5" stroke="#ECE9D8"/>
<path d="M806 535.5H862" stroke="#ECE9D8"/>
</svg>
<div class="a b" style="left:811px;top:522px">Layers</div>
<div class="a" style="left:859px;top:523px">History</div>
<div class="a" style="left:906px;top:523px">Actions</div>
<svg class="a" style="left:989px;top:518px" width="16" height="16"><circle cx="8" cy="8" r="6.5" fill="#E3EAF8" stroke="#B9CDF2" stroke-width="1.5"/><path d="M6.5 4.5l4 3.5-4 3.5z" fill="#1F3F9A"/></svg>
<div class="a sel" style="left:804px;top:538px;width:86px;height:19px"><span class="a" style="left:2px;top:3px">Normal</span><div class="selbtn" style="top:1px"><svg width="15" height="15"><path d="M4 6l3.5 3.5L11 6" stroke="#4D6185" stroke-width="2" fill="none"/></svg></div></div>
<div class="a" style="left:892px;top:543px">Opacity:</div>
<div class="a sel" style="left:937px;top:538px;width:54px;height:19px"><span class="a" style="left:4px;top:3px">100%</span><div class="selbtn" style="top:1px"><svg width="15" height="15"><path d="M4 6l3.5 3.5L11 6" stroke="#4D6185" stroke-width="2" fill="none"/></svg></div></div>
<div class="a" style="left:803px;top:567px">Lock:</div>
<div class="a" style="left:913px;top:567px">Unify:</div>
<svg class="a" style="left:837px;top:566px" width="12" height="12"><rect x="0.5" y="0.5" width="11" height="11" fill="#fff" stroke="#555"/><g fill="#ccc"><rect x="1" y="1" width="3" height="3"/><rect x="7" y="1" width="3" height="3"/><rect x="4" y="4" width="3" height="3"/><rect x="1" y="7" width="3" height="3"/><rect x="7" y="7" width="3" height="3"/></g></svg>
<svg class="a" style="left:855px;top:566px" width="14" height="12"><path d="M1 11c1-2 3-4 5-4l1 1c-1 2-3 3-6 3z" fill="#888" stroke="#333" stroke-width="0.7"/><path d="M6 7l6-6 1 1-6 6z" fill="#666"/></svg>
<svg class="a" style="left:874px;top:566px" width="13" height="13"><path d="M6.5 1v11M1 6.5h11" stroke="#111" stroke-width="1.3"/><path d="M6.5 0l-2.5 2.5h5zM6.5 13l-2.5-2.5h5zM0 6.5l2.5-2.5v5zM13 6.5l-2.5-2.5v5z" fill="#111"/></svg>
<svg class="a" style="left:895px;top:566px" width="11" height="12"><path d="M3 5V3.5a2.5 2.5 0 0 1 5 0V5" stroke="#222" stroke-width="1.3" fill="none"/><rect x="1" y="5" width="9" height="6.5" fill="#333"/></svg>
<svg class="a" style="left:948px;top:565px" width="15" height="14"><rect x="7.5" y="7.5" width="6" height="5" fill="#fff" stroke="#333"/><path d="M8.5 7.5v-2a2 2 0 0 1 4 0v2" stroke="#333" fill="none"/><path d="M1 6l2 2 4-6" stroke="#444" stroke-dasharray="1,1" fill="none"/></svg>
<svg class="a" style="left:968px;top:565px" width="15" height="14"><rect x="7.5" y="7.5" width="6" height="5" fill="#fff" stroke="#333"/><path d="M8.5 7.5v-2a2 2 0 0 1 4 0v2" stroke="#333" fill="none"/><ellipse cx="6" cy="5" rx="5" ry="3" fill="#ddd" stroke="#333"/><circle cx="6" cy="5" r="1.6" fill="#111"/></svg>
<svg class="a" style="left:987px;top:565px" width="15" height="14"><rect x="7.5" y="7.5" width="6" height="5" fill="#fff" stroke="#333"/><path d="M8.5 7.5v-2a2 2 0 0 1 4 0v2" stroke="#333" fill="none"/><circle cx="6" cy="5" r="4.5" fill="#333"/><path d="M4 8l4-6" stroke="#fff"/></svg>
<div class="a" style="left:801px;top:584px;width:207px;height:102px;background:#ECE9D8;border-top:1px solid #ACA899"></div>
<div class="a" style="left:801px;top:585px;width:191px;height:101px;overflow:hidden"><div class="a" style="left:44px;top:0px;width:147px;height:30px;background:#316AC5"></div><div class="a" style="left:0px;top:29px;width:191px;height:1px;background:#C9C6B6"></div><div class="a" style="left:0px;top:30px;width:191px;height:1px;background:#fff"></div><div class="a" style="left:21px;top:2px;width:1px;height:25px;background:#ACA899"></div><div class="a" style="left:43px;top:0px;width:1px;height:30px;background:#ACA899"></div><div class="a" style="left:3px;top:7px;width:16px;height:16px;border:1px solid #ACA899;border-right-color:#fff;border-bottom-color:#fff"></div><div class="a" style="left:25px;top:7px;width:16px;height:16px;border:1px solid #ACA899;border-right-color:#fff;border-bottom-color:#fff"></div><svg class="a" style="left:4px;top:10px" width="14" height="11"><path d="M0.8 5.5Q7 -0.5 13.2 5.5Q7 11.5 0.8 5.5z" fill="#E8E8E8" stroke="#222" stroke-width="1"/><circle cx="6.5" cy="5.3" r="2.7" fill="#111"/><circle cx="5.6" cy="4.4" r="0.8" fill="#fff"/><path d="M1.5 3.8Q7 -1.5 12.5 3.8" stroke="#333" stroke-width="0.9" fill="none"/></svg><div class="a" style="left:47px;top:2px;width:38px;height:28px;background:#000;padding:1px"><div style="width:36px;height:26px;border:1px solid #316AC5;background:#000;padding:1px"><div style="width:32px;height:22px;background:#fff"></div></div></div><div class="a" style="left:59px;top:6px;font-family:'Liberation Serif',serif;font-size:19px;line-height:19px;color:#111;text-shadow:1px 1px 1px rgba(0,0,0,.3)">T</div><div class="a" style="left:0px;top:60px;width:191px;height:1px;background:#C9C6B6"></div><div class="a" style="left:0px;top:61px;width:191px;height:1px;background:#fff"></div><div class="a" style="left:21px;top:33px;width:1px;height:25px;background:#ACA899"></div><div class="a" style="left:43px;top:31px;width:1px;height:30px;background:#ACA899"></div><div class="a" style="left:3px;top:38px;width:16px;height:16px;border:1px solid #ACA899;border-right-color:#fff;border-bottom-color:#fff"></div><div class="a" style="left:25px;top:38px;width:16px;height:16px;border:1px solid #ACA899;border-right-color:#fff;border-bottom-color:#fff"></div><svg class="a" style="left:4px;top:41px" width="14" height="11"><path d="M0.8 5.5Q7 -0.5 13.2 5.5Q7 11.5 0.8 5.5z" fill="#E8E8E8" stroke="#222" stroke-width="1"/><circle cx="6.5" cy="5.3" r="2.7" fill="#111"/><circle cx="5.6" cy="4.4" r="0.8" fill="#fff"/><path d="M1.5 3.8Q7 -1.5 12.5 3.8" stroke="#333" stroke-width="0.9" fill="none"/></svg><div class="a" style="left:49px;top:35px;width:34px;height:23px;background:#fff;border:1px solid #000;box-shadow:inset 0 0 0 0.5px #000"></div><div class="a" style="left:59px;top:37px;font-family:'Liberation Serif',serif;font-size:19px;line-height:19px;color:#111;text-shadow:1px 1px 1px rgba(0,0,0,.3)">T</div><div class="a" style="left:0px;top:91px;width:191px;height:1px;background:#C9C6B6"></div><div class="a" style="left:0px;top:92px;width:191px;height:1px;background:#fff"></div><div class="a" style="left:21px;top:64px;width:1px;height:25px;background:#ACA899"></div><div class="a" style="left:43px;top:62px;width:1px;height:30px;background:#ACA899"></div><div class="a" style="left:3px;top:69px;width:16px;height:16px;border:1px solid #ACA899;border-right-color:#fff;border-bottom-color:#fff"></div><div class="a" style="left:25px;top:69px;width:16px;height:16px;border:1px solid #ACA899;border-right-color:#fff;border-bottom-color:#fff"></div><svg class="a" style="left:4px;top:72px" width="14" height="11"><path d="M0.8 5.5Q7 -0.5 13.2 5.5Q7 11.5 0.8 5.5z" fill="#E8E8E8" stroke="#222" stroke-width="1"/><circle cx="6.5" cy="5.3" r="2.7" fill="#111"/><circle cx="5.6" cy="4.4" r="0.8" fill="#fff"/><path d="M1.5 3.8Q7 -1.5 12.5 3.8" stroke="#333" stroke-width="0.9" fill="none"/></svg><div class="a" style="left:49px;top:66px;width:34px;height:23px;background:#fff;border:1px solid #000;box-shadow:inset 0 0 0 0.5px #000"></div><div class="a" style="left:59px;top:68px;font-family:'Liberation Serif',serif;font-size:19px;line-height:19px;color:#111;text-shadow:1px 1px 1px rgba(0,0,0,.3)">T</div><div class="a" style="left:0px;top:122px;width:191px;height:1px;background:#C9C6B6"></div><div class="a" style="left:0px;top:123px;width:191px;height:1px;background:#fff"></div><div class="a" style="left:21px;top:95px;width:1px;height:25px;background:#ACA899"></div><div class="a" style="left:43px;top:93px;width:1px;height:30px;background:#ACA899"></div><div class="a" style="left:3px;top:100px;width:16px;height:16px;border:1px solid #ACA899;border-right-color:#fff;border-bottom-color:#fff"></div><div class="a" style="left:25px;top:100px;width:16px;height:16px;border:1px solid #ACA899;border-right-color:#fff;border-bottom-color:#fff"></div><div class="a" style="left:49px;top:97px;width:34px;height:23px;background:#fff;border:1px solid #000;box-shadow:inset 0 0 0 0.5px #000"></div><svg class="a" style="left:27px;top:10px" width="13" height="12"><path d="M0.8 11c1-3 3.5-4.5 5.5-4.5l1.2 1.2c-1 2.6-3.7 3.6-6.7 3.3z" fill="#C8C8C8" stroke="#333" stroke-width="0.8"/><path d="M6.5 6.5l5-5.3 1 1-5.2 5.2z" fill="#555"/></svg><svg class="a" style="left:0;top:0" width="191" height="101" viewBox="801 585 191 101"><path fill-rule="evenodd" fill="#000" d="M971.6 633.7L971.3 634.0L971.2 634.3L971.4 634.5L971.9 634.6L972.2 634.5L972.4 634.1L972.1 633.8ZM957.3 630.1L956.4 630.4L956.9 631.2L957.2 632.3L957.1 633.2L956.4 633.8L955.6 634.1L954.6 634.3L953.7 634.2L952.6 633.9L952.1 633.6L951.9 633.1L951.9 632.4L952.2 631.6L951.5 631.4L951.0 632.6L951.1 633.5L951.4 634.1L951.9 634.5L952.6 634.7L953.8 635.0L955.0 635.0L955.9 634.8L957.1 634.3L957.8 633.5L958.1 632.7L958.0 631.5ZM954.4 628.5L954.0 628.7L954.0 629.0L954.1 629.2L954.7 629.3L955.0 629.2L955.1 628.8L954.8 628.5ZM959.6 626.5L959.9 631.9L960.2 632.5L961.0 632.8L962.9 632.9L964.1 632.8L965.3 632.5L967.1 631.8L967.3 631.8L967.5 632.3L967.8 632.6L968.3 632.8L969.1 632.9L971.0 632.8L971.8 632.3L972.2 632.7L973.2 632.9L974.7 632.9L975.1 632.8L975.7 632.3L976.1 632.8L976.7 632.9L978.2 632.8L978.9 632.4L979.1 632.7L979.5 632.8L980.8 632.9L981.7 632.7L982.3 632.0L982.4 631.0L981.9 629.4L981.7 629.3L981.0 629.6L981.6 631.2L981.6 631.8L981.3 632.1L981.0 632.2L979.8 632.2L979.4 632.0L979.4 631.4L979.5 630.5L978.7 630.4L978.3 631.8L977.8 632.2L977.0 632.3L976.3 632.0L976.2 631.5L976.4 630.6L975.6 630.5L975.1 631.7L974.7 632.2L973.8 632.3L972.8 632.2L972.3 631.8L972.3 631.3L972.5 630.5L971.6 630.4L971.3 631.7L970.9 632.1L970.1 632.3L969.0 632.2L968.3 632.0L968.0 631.6L968.0 631.5L968.6 631.4L968.6 630.9L967.8 630.8L965.7 630.0L964.8 629.8L963.0 629.9L963.0 630.5L964.6 630.5L965.5 630.6L966.5 631.0L966.7 631.1L966.6 631.3L965.5 631.7L963.9 632.1L962.5 632.3L961.5 632.2L960.9 631.9L960.8 631.5L960.6 626.5ZM946.6 627.0L946.8 634.4L947.6 634.4L947.4 627.0ZM945.0 627.0L944.3 627.0L944.5 632.7L944.4 633.2L944.1 633.6L943.0 633.6L942.7 633.5L942.3 633.0L942.2 631.7L942.1 628.5L941.4 628.5L941.5 632.9L941.3 633.5L940.6 633.7L939.9 633.6L939.6 633.5L939.3 633.1L939.2 632.3L939.1 629.1L938.3 629.1L938.3 629.9L937.3 630.1L936.7 630.5L936.2 630.9L935.8 631.8L935.8 632.4L936.0 632.8L936.4 633.2L937.0 633.5L938.5 633.4L938.9 634.0L939.3 634.3L939.9 634.4L941.3 634.3L941.7 634.1L942.0 633.8L942.4 634.2L943.0 634.4L943.8 634.4L944.5 634.2L945.0 633.8L945.2 632.9ZM938.3 630.7L938.4 632.6L937.2 632.6L936.6 632.2L936.5 631.8L936.9 631.3L937.5 630.8ZM942.7 625.8L942.3 625.9L942.4 626.8L942.2 627.1L942.0 627.1L941.8 626.9L941.8 626.1L941.4 626.2L941.4 627.1L941.1 627.4L940.9 627.3L940.8 627.2L940.8 626.4L940.4 626.6L940.3 627.3L940.5 627.7L940.8 627.9L941.2 627.9L941.4 627.8L941.7 627.4L942.0 627.6L942.6 627.4L942.9 626.9L942.9 626.5ZM941.3 624.0L941.3 625.7L941.8 625.7L941.7 624.0ZM926.0 634.4L925.7 634.8L925.6 635.3L925.8 635.6L926.3 635.8L926.5 635.6L926.6 634.9L926.4 634.5ZM930.8 628.5L929.9 628.5L929.1 629.2L928.7 630.4L928.6 631.8L928.8 632.5L929.3 633.1L929.8 633.2L931.0 633.1L931.0 633.4L930.7 633.9L930.2 634.5L929.2 635.1L928.3 635.3L928.5 636.3L929.5 636.1L930.6 635.5L931.3 634.6L931.7 633.6L931.9 632.4L931.8 630.5L931.4 629.1ZM930.0 629.5L930.4 629.5L930.9 630.0L931.2 631.4L931.2 631.9L931.1 632.0L929.9 632.1L929.4 631.6L929.3 630.9L929.4 630.4ZM907.3 632.4L907.5 632.7L908.3 633.1L909.6 633.1L910.5 632.8L911.0 632.1L911.3 632.7L911.7 633.0L912.8 633.1L913.2 633.0L913.6 632.7L914.0 631.7L914.7 632.7L915.1 633.1L915.8 633.4L916.3 633.4L916.7 633.1L917.2 632.4L917.4 632.8L918.2 633.1L920.1 632.9L921.2 632.4L922.8 631.3L923.1 632.2L923.5 632.7L924.5 633.1L925.5 633.1L926.4 632.9L926.9 632.4L927.2 631.5L927.3 630.1L926.8 627.6L926.6 627.5L926.0 627.9L926.5 630.4L926.5 631.2L926.4 631.7L925.9 632.0L924.5 632.0L923.8 631.7L923.5 631.1L923.6 630.9L924.1 630.8L924.0 629.9L923.4 629.8L921.2 628.3L919.6 628.2L919.1 628.4L919.2 629.4L919.7 629.3L920.9 629.3L921.8 629.8L922.4 630.4L921.4 631.2L920.4 631.7L918.5 632.1L917.9 631.9L917.6 631.5L916.8 629.0L916.5 628.5L915.9 628.1L915.3 628.1L914.8 628.4L914.2 629.1L913.3 631.5L912.9 631.9L912.4 632.1L912.0 631.9L911.6 631.5L911.1 629.5L909.9 626.5L909.2 627.1L910.3 629.8L910.5 630.5L910.5 631.3L909.9 631.9L909.3 632.1L908.5 632.0L907.6 631.6ZM915.4 629.1L915.7 629.1L916.1 629.5L916.6 631.0L916.6 631.7L916.3 632.2L915.9 632.3L915.2 631.9L914.4 630.7L914.7 629.9ZM904.6 626.5L904.1 627.3L904.3 627.7L903.7 628.6L903.2 629.7L903.0 630.5L903.0 631.3L903.3 632.2L903.6 632.7L904.1 633.0L905.1 633.1L905.8 632.7L906.2 632.2L906.5 631.4L906.5 630.2L906.3 629.3L905.9 628.2ZM904.9 628.3L905.7 629.5L905.9 630.2L905.9 631.0L905.5 631.7L904.7 632.0L904.0 631.6L903.8 631.0L903.8 630.5L904.1 629.3ZM899.3 629.1L899.1 629.0L898.1 629.3L898.9 631.3L898.8 632.1L898.2 632.6L896.7 632.6L896.1 632.2L896.3 630.4L895.3 630.3L894.9 631.8L894.6 632.3L893.8 632.6L893.1 632.6L892.4 632.2L891.7 630.3L890.6 630.5L891.2 632.3L891.2 633.3L891.1 633.8L890.7 634.3L890.1 634.7L888.9 635.1L887.7 635.1L887.7 635.9L889.5 635.8L891.0 635.3L891.8 634.6L892.4 633.2L893.2 633.4L894.1 633.4L894.8 633.3L895.4 632.8L895.9 633.2L896.8 633.4L897.9 633.4L899.1 633.1L899.5 632.8L899.9 631.8L899.9 630.7Z"/><rect x="983" y="632" width="2" height="2" fill="#000"/><rect x="986" y="632" width="2" height="2" fill="#000"/><rect x="989" y="632" width="2" height="2" fill="#000"/></svg></div>
<div class="a" style="left:992px;top:585px;width:14px;height:101px;background:#F4F3EE"></div>
<div class="a" style="left:992px;top:586px;width:14px;height:15px;background:linear-gradient(90deg,#C8D6F8,#B4C8F4);border:1px solid #fff;border-radius:2px"><svg width="12" height="13"><path d="M2.5 8l3.5-3.5L9.5 8" stroke="#4D6185" stroke-width="2" fill="none"/></svg></div>
<div class="a" style="left:992px;top:603px;width:14px;height:53px;background:linear-gradient(90deg,#C8D6F8,#B4C8F4);border:1px solid #fff;border-radius:2px"></div>
<div class="a" style="left:995px;top:625px;width:7px;height:7px;background:repeating-linear-gradient(#EEF3FF 0 1px,#8CA8E0 1px 2px)"></div>
<div class="a" style="left:992px;top:669px;width:14px;height:16px;background:linear-gradient(90deg,#C8D6F8,#B4C8F4);border:1px solid #fff;border-radius:2px"><svg width="12" height="14"><path d="M2.5 5l3.5 3.5L9.5 5" stroke="#4D6185" stroke-width="2" fill="none"/></svg></div>
<div class="a" style="left:801px;top:686px;width:207px;height:1px;background:#ACA899"></div>
<svg class="a" style="left:805px;top:688px" width="200" height="13"><path d="M1 6l6-5v10z" fill="#C5C2B4"/><rect x="9" y="1" width="2" height="10" fill="#C5C2B4"/><rect x="12" y="1" width="1.5" height="10" fill="#C5C2B4"/><rect x="24" y="1" width="1.5" height="10" fill="#C5C2B4"/><rect x="27" y="1" width="2" height="10" fill="#C5C2B4"/><path d="M38 6l-7-5v10z" fill="#C5C2B4"/><path d="M43 0v13" stroke="#ACA899"/><circle cx="58" cy="6" r="5.5" fill="#333"/><path d="M56 10l2-7h3M56 6h3" stroke="#fff" stroke-width="1.1" fill="none"/><path d="M66 10l2 2h-2z" fill="#000"/><rect x="79.5" y="0.5" width="13" height="11" fill="#CCC" stroke="#444"/><circle cx="86" cy="6" r="3.5" fill="#fff" stroke="#333"/><path d="M101.5 0v13" stroke="#ACA899"/><path d="M102.5 0v13" stroke="#fff"/><path d="M110.5 3.5h4l1-1.5h6v9h-11z" fill="url(#fgr)" stroke="#222" stroke-width="0.9"/><path d="M111 11.5h11M121.5 3v8.5" stroke="#111"/><rect x="141.5" y="1.5" width="9.5" height="9.5" fill="url(#ngr)" stroke="#111"/><rect x="144.5" y="5.5" width="3" height="3" fill="none" stroke="#222" stroke-width="0.9"/><path d="M151.5 2v9.5H142" stroke="#000" fill="none"/><ellipse cx="174.5" cy="3" rx="4.5" ry="2" fill="#fff" stroke="#222" stroke-width="0.9"/><path d="M170.5 4l1 7.5h6l1-7.5" fill="#F4F4F4" stroke="#222" stroke-width="0.9"/><path d="M173 5.5v5M176 5.5v5" stroke="#333" stroke-width="0.9"/><g fill="#B7B4A4"><rect x="198" y="2" width="2" height="2"/><rect x="195" y="5" width="2" height="2"/><rect x="198" y="5" width="2" height="2"/><rect x="192" y="8" width="2" height="2"/><rect x="195" y="8" width="2" height="2"/><rect x="198" y="8" width="2" height="2"/></g></svg>
<!-- toolbox -->
<div class="a" style="left:1px;top:116px;width:63px;height:392px;background:#0E62F6;border-left:1px solid #0034DC;box-shadow:inset -1px -1px 0 #001294,inset -2px -2px 0 #0028BC,inset -3px -3px 0 #0046E4"></div><div class="a" style="left:1px;top:116px;width:63px;height:21px;background:linear-gradient(#3F8CF4 0,#62AEFF 1px,#2A84FF 2px,#0A66F0 4px,#0062EA 10px,#0A68EE 19px,#0050DC 20px);border-left:1px solid #0034DC;border-top-left-radius:2px;border-top-right-radius:2px;box-shadow:inset -1px 0 0 #0A4ED8"></div><div class="a" style="left:4px;top:137px;width:57px;height:367px;background:#ECE9D8;box-shadow:inset 1px 0 0 #FFF9E8"></div><div class="a" style="left:4px;top:137px;width:57px;height:23px;background:#fff"></div>
<svg class="a" style="left:4px;top:136px" width="57" height="372" viewBox="4 136 57 372">
 <!-- feather -->
 <defs><linearGradient id="fg1" x1="0" y1="0" x2="1" y2="1"><stop offset="0" stop-color="#D8D8D8"/><stop offset="1" stop-color="#6A6A6A"/></linearGradient>
 <linearGradient id="fg2" x1="0" y1="0" x2="0" y2="1"><stop offset="0" stop-color="#C8C8C8"/><stop offset="1" stop-color="#8A8A8A"/></linearGradient></defs>
 <path d="M23 139c2-1 5-1 7 0l4 6c1 3 0 7-1 9l-3 3c-2-2-4-4-5-7-1-4-2-8-2-11z" fill="url(#fg1)"/>
 <path d="M33 145c3-3 8-6 13-7l7-1c2 0 4 1 4 2l-2 5c-3 3-7 6-11 8l-8 4c-2-3-3-7-3-11z" fill="url(#fg2)"/>
 <path d="M23 137.5c2-0.5 5-0.5 7 0.5l-1 2c-2-1-4-1-6-1z" fill="#222"/>
 <path d="M51 137.5c3-0.5 5 0 6 1l-2 5c-2 0-3-1-4-2z" fill="#1E1E1E"/>
 <path d="M22 158l7-4M30 155l1 4" stroke="#555" stroke-width="1.1"/>
 <path d="M28 150l4 4" stroke="#555" stroke-width="1"/>
 <g stroke="#ACA899"><path d="M6 186.5h54M6 211.5h54M6 236.5h54M6 261.5h54M6 307.5h54M6 353.5h54M6 407.5h54M6 432.5h54M6 457.5h54M6 478.5h54"/></g>
 <!-- marquee -->
 <path d="M12.5 171v-3.5H16M19 167.5h3M24 167.5h2.5v3.5M26.5 173v3M26.5 178v2.5H23M20 180.5h-2M15 180.5h-2.5V177M12.5 175v-2" stroke="#2A2A2A" stroke-width="1.1" fill="none"/>
 <path d="M29 181l2.5 1.8-2.5 1.8z" fill="#000"/>
 <!-- move -->
 <defs><linearGradient id="mvg" x1="0" y1="0" x2="1" y2="0"><stop offset="0" stop-color="#9A9A9A"/><stop offset="0.6" stop-color="#111"/></linearGradient></defs>
 <path d="M36 166l8 7.5-3.5.3 0 0-4.5 3.5z" fill="url(#mvg)"/>
 <path d="M48.5 172.5v9M44 177h9" stroke="#111" stroke-width="1.3"/>
 <path d="M48.5 171.5l-2 2.2h4zM48.5 182.5l-2-2.2h4zM43 177l2.2-2v4zM54 177l-2.2-2v4z" fill="#111"/>
 <!-- slice -->
 <defs><linearGradient id="kbl2" x1="0" y1="1" x2="1" y2="0"><stop offset="0" stop-color="#888"/><stop offset="1" stop-color="#F0F0F0"/></linearGradient><linearGradient id="khd2" x1="0" y1="0" x2="1" y2="1"><stop offset="0" stop-color="#DDD"/><stop offset="1" stop-color="#555"/></linearGradient></defs>
 <g transform="translate(11,191)"><path d="M0.8 15.2L8.6 7.6L11.2 10.4z" fill="url(#kbl2)" stroke="#222" stroke-width="0.8" stroke-linejoin="round"/><path d="M9.6 7.2L16.2 1L18.2 1.6L11.8 9.6z" fill="url(#khd2)" stroke="#333" stroke-width="0.6"/><path d="M6.8 6.4L12.2 11.6" stroke="#111" stroke-width="1.3"/></g>
 <g transform="translate(36,191)"><path d="M0.8 15.2L8.6 7.6L11.2 10.4z" fill="url(#kbl2)" stroke="#222" stroke-width="0.8" stroke-linejoin="round"/><path d="M9.6 7.2L16.2 1L18.2 1.6L11.8 9.6z" fill="url(#khd2)" stroke="#333" stroke-width="0.6"/><path d="M6.8 6.4L12.2 11.6" stroke="#111" stroke-width="1.3"/></g>
 <path d="M37 192.5l4.5 4.5" stroke="#111" stroke-width="1.2"/><path d="M36 191.5l4 1-3 3z" fill="#111"/>
 <!-- image map -->
 <defs><linearGradient id="sqg" x1="0" y1="0" x2="1" y2="1"><stop offset="0" stop-color="#FAFAFA"/><stop offset="1" stop-color="#B8B8B8"/></linearGradient></defs>
 <rect x="12.5" y="215.5" width="12" height="11" fill="url(#sqg)" stroke="#444"/>
 <path transform="translate(16,218) scale(0.95)" d="M3 9.5V2.2Q3 0.5 4.5 0.5Q6 0.5 6 2.2V7Q6.2 6 7.5 6Q8.8 6 9 7.3Q9.3 6.5 10.3 6.5Q11.6 6.5 11.7 7.9Q12 7.5 12.6 7.7Q13.5 8 13.5 9.5V12.3Q13.5 16.5 9.3 16.5H6.3Q4.8 16.5 3.8 15.2L0.9 11.2Q0.3 10.2 1.1 9.6Q2 9.1 3 10z" fill="#fff" stroke="#333" stroke-width="0.9"/><path transform="translate(16,218) scale(0.95)" d="M6 10v3M9 10v3M11.7 10v3" stroke="#999" stroke-width="0.8"/>
 <path transform="translate(39,218) scale(0.95)" d="M3 9.5V2.2Q3 0.5 4.5 0.5Q6 0.5 6 2.2V7Q6.2 6 7.5 6Q8.8 6 9 7.3Q9.3 6.5 10.3 6.5Q11.6 6.5 11.7 7.9Q12 7.5 12.6 7.7Q13.5 8 13.5 9.5V12.3Q13.5 16.5 9.3 16.5H6.3Q4.8 16.5 3.8 15.2L0.9 11.2Q0.3 10.2 1.1 9.6Q2 9.1 3 10z" fill="#fff" stroke="#333" stroke-width="0.9"/><path transform="translate(39,218) scale(0.95)" d="M6 10v3M9 10v3M11.7 10v3" stroke="#999" stroke-width="0.8"/>
 <path d="M37 216l4.5 4.5" stroke="#111" stroke-width="1.2"/><path d="M36 215l4 1-3 3z" fill="#111"/>
 <path d="M29 231l2.5 1.8-2.5 1.8z" fill="#000"/>
 <!-- eraser -->
 <path d="M12.5 252.5l7-6.5h9l-7 6.5z" fill="#F4F4F4" stroke="#333" stroke-width="0.9"/>
 <path d="M12.5 252.5v3h9l7-6.5v-3l-7 6.5z" fill="#A8A8A8" stroke="#333" stroke-width="0.9"/>
 <path d="M10 241.5h7M13.5 238v7M11 239l5 5M16 239l-5 5" stroke="#444" stroke-width="0.7"/>
 <path d="M29 256l2.5 1.8-2.5 1.8z" fill="#000"/>
 <!-- brush -->
 <path d="M38 256c2-3 5-5 7-5l2 2c-1 2-4 4-9 3z" fill="#888" stroke="#333" stroke-width="0.8"/>
 <path d="M46 251l7-9 1 1-6 10z" fill="#555"/>
 <path d="M54 255l2 2h-2z" fill="#000"/>
 <!-- type pressed -->
 <rect x="8.5" y="264.5" width="23" height="19" rx="3" fill="#fff" stroke="#7F9DB9"/>
 <text x="13.5" y="280" font-family="Liberation Serif" font-size="18" fill="#000">T</text>
 <!-- rect -->
 <rect x="38.5" y="268.5" width="13" height="12" fill="url(#gr)" stroke="#333"/>
 <path d="M54 283l2 2h-2z" fill="#000"/>
 <!-- line -->
 <path d="M13 289l13 13" stroke="#111" stroke-width="1.4"/>
 <!-- rounded rect -->
 <path d="M38.5 300.5v-8q0-3 3-3h7q3 0 3 3v8z" fill="url(#gr)" stroke="#333"/>
 <path d="M54 304l2 2h-2z" fill="#000"/>
 <!-- crop -->
 <path d="M15 312v12h12M12 315h12v12" stroke="#222" stroke-width="2" fill="none"/>
 <path d="M15 324l9-9" stroke="#222" stroke-width="1"/>
 <!-- eyedropper -->
 <path d="M38 328l9-9 2 2-9 9z" fill="#eee" stroke="#333"/>
 <path d="M47 318l4-4c1-1 2-1 2 0l1 1c0 1 0 1-1 2l-4 4z" fill="#222"/>
 <!-- hand -->
 <path d="M14 349c-2-2-3.5-4.5-3.5-6.5 0-1 1-1.4 1.8-.6l1.7 1.8v-8.2c0-1 1.8-1 1.8 0v5.5-7c0-1 1.8-1 1.8 0v7-6.5c0-1 1.8-1 1.8 0v6.5-5c0-1 1.8-1 1.8 0v8.5c0 3-2 5.5-4.5 5.5z" fill="#fff" stroke="#333" stroke-width="0.9"/>
 <!-- zoom -->
 <circle cx="42" cy="340" r="4.5" fill="#E8F0F8" stroke="#333" stroke-width="1.5"/>
 <path d="M45 343l6 6" stroke="#222" stroke-width="2.5"/>
 <!-- colors -->
 <rect x="23" y="371" width="30" height="30" fill="#808080"/>
 <rect x="25" y="373" width="26" height="26" fill="#fff"/>
 <rect x="11" y="359" width="29" height="29" fill="#fff"/>
 <rect x="12" y="360" width="27" height="27" fill="#808080"/>
 <rect x="14" y="362" width="23" height="23" fill="#E396DE"/>
 <path d="M46 360q4-1 6 3M52 366q-2 2-6 0" stroke="#222" stroke-width="1.1" fill="none"/>
 <path d="M45 359l2 2-1 1zM53 366l-2 2 1-3z" fill="#222"/>
 <rect x="13" y="396" width="6" height="6" fill="#fff" stroke="#333" stroke-width="0.8"/>
 <rect x="10" y="393" width="6" height="6" fill="#000"/>
 <!-- rollover/image map -->
 <defs><linearGradient id="dkg" x1="0" y1="0" x2="1" y2="1"><stop offset="0" stop-color="#B8B8B8"/><stop offset="1" stop-color="#5A5A5A"/></linearGradient></defs>
 <rect x="12.5" y="411.5" width="13" height="12" fill="url(#dkg)" stroke="#333"/>
 <path transform="translate(16,413) scale(0.95)" d="M3 9.5V2.2Q3 0.5 4.5 0.5Q6 0.5 6 2.2V7Q6.2 6 7.5 6Q8.8 6 9 7.3Q9.3 6.5 10.3 6.5Q11.6 6.5 11.7 7.9Q12 7.5 12.6 7.7Q13.5 8 13.5 9.5V12.3Q13.5 16.5 9.3 16.5H6.3Q4.8 16.5 3.8 15.2L0.9 11.2Q0.3 10.2 1.1 9.6Q2 9.1 3 10z" fill="#fff" stroke="#333" stroke-width="0.9"/><path transform="translate(16,413) scale(0.95)" d="M6 10v3M9 10v3M11.7 10v3" stroke="#999" stroke-width="0.8"/>
 <rect x="35.5" y="412.5" width="18" height="14" fill="url(#dkg)" stroke="#333"/>
 <rect x="37" y="414" width="15" height="3" fill="#D8D8D8"/>
 <rect x="40" y="418" width="9" height="5" fill="#fff"/>
 <rect x="37" y="423" width="15" height="2" fill="#C8C8C8"/>
 <!-- sparkle hand -->
 <path transform="translate(14,440) scale(0.95)" d="M3 9.5V2.2Q3 0.5 4.5 0.5Q6 0.5 6 2.2V7Q6.2 6 7.5 6Q8.8 6 9 7.3Q9.3 6.5 10.3 6.5Q11.6 6.5 11.7 7.9Q12 7.5 12.6 7.7Q13.5 8 13.5 9.5V12.3Q13.5 16.5 9.3 16.5H6.3Q4.8 16.5 3.8 15.2L0.9 11.2Q0.3 10.2 1.1 9.6Q2 9.1 3 10z" fill="#fff" stroke="#333" stroke-width="0.9"/><path transform="translate(14,440) scale(0.95)" d="M6 10v3M9 10v3M11.7 10v3" stroke="#999" stroke-width="0.8"/>
 <path d="M19 436v8M15 440h8M16.2 437.2l5.6 5.6M21.8 437.2l-5.6 5.6" stroke="#444" stroke-width="0.7"/>
 <!-- IE -->
 <circle cx="45.5" cy="445" r="6" fill="#2A8EE6"/>
 <circle cx="45.5" cy="445" r="3.2" fill="#fff"/>
 <rect x="42" y="444" width="7.5" height="1.8" fill="#2A8EE6"/>
 <path d="M48 446.5h4v3h-5z" fill="#2A8EE6"/>
 <path d="M41 447.5l8 1" stroke="#fff" stroke-width="1.4"/>
 <path d="M38.5 451.5c-1.5-2 2-6.5 7-9.5s9-4 9.5-2.5c0.5 1.2-1.5 3-3 4" stroke="#F0A830" stroke-width="1.4" fill="none"/>
 <path d="M54 455l2.5 1.8-2.5 1.8z" fill="#000"/>
 <!-- screen modes -->
 <rect x="8.5" y="460.5" width="15" height="15" rx="2" fill="#fff" stroke="#7F9DB9"/>
 <rect x="10.5" y="462.5" width="11" height="10" fill="#aaa" stroke="#222"/>
 <rect x="12.5" y="465.5" width="7" height="5" fill="#ccc" stroke="#555" stroke-width="0.8"/>
 <rect x="27.5" y="462.5" width="10" height="10" fill="url(#gr)" stroke="#222"/>
 <path d="M28 464.5h9" stroke="#222" stroke-width="1.5"/>
 <rect x="43.5" y="462.5" width="10" height="10" fill="url(#gr)" stroke="#222"/>
 <!-- jump to -->
 <path d="M14 484h8l3 3v12H14z" fill="#fff" stroke="#111"/>
 <rect x="11" y="485" width="10" height="3" fill="#222"/>
 <path d="M19 496q3-7 10-6v-3l7 5-7 5v-3q-5 0-10 2z" fill="#ddd" stroke="#111"/>
 <rect x="38.5" y="482.5" width="14" height="16" fill="#fff" stroke="#999"/>
 <path d="M40 498l4-7c2-4 5-7 8-8v6c-3 4-7 7-12 9z" fill="#777"/>
 <defs><linearGradient id="gr" x1="0" y1="0" x2="1" y2="1"><stop offset="0" stop-color="#fff"/><stop offset="1" stop-color="#888"/></linearGradient></defs>
</svg>
</body></html>
